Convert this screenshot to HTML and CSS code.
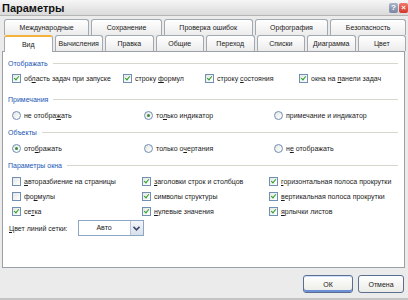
FILE: index.html
```html
<!DOCTYPE html>
<html lang="ru">
<head>
  <meta charset="UTF-8" />
  <title>Параметры</title>
  <link rel="stylesheet" href="styles.css">
</head>
<body>
  <div class="window">
    <div class="titlebar">
      <span class="title">Параметры</span>
      <span class="tb-btn help">?</span>
      <span class="tb-btn close">×</span>
    </div>

    <div class="tabs">
      <div class="tab-row row-back">
        <div class="tab">Международные</div>
        <div class="tab">Сохранение</div>
        <div class="tab">Проверка ошибок</div>
        <div class="tab">Орфография</div>
        <div class="tab">Безопасность</div>
      </div>
      <div class="tab-row row-front">
        <div class="tab active">Вид</div>
        <div class="tab">Вычисления</div>
        <div class="tab">Правка</div>
        <div class="tab">Общие</div>
        <div class="tab">Переход</div>
        <div class="tab">Списки</div>
        <div class="tab">Диаграмма</div>
        <div class="tab">Цвет</div>
      </div>
    </div>

    <div class="panel">
      <div class="group g-show">
        <div class="group-title">Отображать</div>
        <div class="row cols-show">
          <label class="opt"><span class="cb on"></span><span>об<u>л</u>асть задач при запуске</span></label>
          <label class="opt"><span class="cb on"></span><span>строку <u>ф</u>ормул</span></label>
          <label class="opt"><span class="cb on"></span><span>строку <u>с</u>остояния</span></label>
          <label class="opt"><span class="cb on"></span><span>окна на <u>п</u>анели задач</span></label>
        </div>
      </div>

      <div class="group g-notes">
        <div class="group-title">Примечания</div>
        <div class="row cols-3 radio-row">
          <label class="opt"><span class="rb"></span><span>не отобра<u>ж</u>ать</span></label>
          <label class="opt"><span class="rb on"></span><span>то<u>л</u>ько индикатор</span></label>
          <label class="opt"><span class="rb"></span><span>примечание и ин<u>д</u>икатор</span></label>
        </div>
      </div>

      <div class="group g-obj">
        <div class="group-title">Объекты</div>
        <div class="row cols-3 radio-row">
          <label class="opt"><span class="rb on"></span><span>ото<u>б</u>ражать</span></label>
          <label class="opt"><span class="rb"></span><span>только о<u>ч</u>ертания</span></label>
          <label class="opt"><span class="rb"></span><span>н<u>е</u> отображать</span></label>
        </div>
      </div>

      <div class="group g-win">
        <div class="group-title">Параметры окна</div>
        <div class="row cols-win">
          <label class="opt"><span class="cb"></span><span><u>а</u>вторазбиение на страницы</span></label>
          <label class="opt"><span class="cb on"></span><span><u>з</u>аголовки строк и столбцов</span></label>
          <label class="opt"><span class="cb on"></span><span><u>г</u>оризонтальная полоса прокрутки</span></label>
        </div>
        <div class="row cols-win">
          <label class="opt"><span class="cb"></span><span>фо<u>р</u>мулы</span></label>
          <label class="opt"><span class="cb on"></span><span>символы структуры</span></label>
          <label class="opt"><span class="cb on"></span><span><u>в</u>ертикальная полоса прокрутки</span></label>
        </div>
        <div class="row cols-win">
          <label class="opt"><span class="cb on"></span><span>се<u>т</u>ка</span></label>
          <label class="opt"><span class="cb on"></span><span><u>н</u>улевые значения</span></label>
          <label class="opt"><span class="cb on"></span><span><u>я</u>рлычки листов</span></label>
        </div>
        <div class="color-row">
          <span><u>Ц</u>вет линий сетки:</span>
          <div class="select">
            <span class="select-value">Авто</span>
            <span class="select-arrow">
              <svg width="7" height="5" viewBox="0 0 7 5"><polyline points="0.5,0.8 3.5,3.8 6.5,0.8" fill="none" stroke="#3c4a6a" stroke-width="1.6"/></svg>
            </span>
          </div>
        </div>
      </div>
    </div>

    <div class="footer">
      <button class="btn default">ОК</button>
      <button class="btn">Отмена</button>
    </div>
  </div>
</body>
</html>
```

FILE: styles.css
```css
body {
  margin: 0;
  font-family: 'Liberation Sans', Arial, sans-serif;
  font-size: 7px;
  color: #1a1a1a;
}

.window {
  width: 408px;
  height: 300px;
  box-sizing: border-box;
  background: #ebebeb;
  border-bottom: 2px solid #c4c4c4;
  display: flex;
  flex-direction: column;
}

.titlebar {
  height: 15px;
  display: flex;
  align-items: center;
  background: linear-gradient(#f6f6f6, #dadada);
  border-bottom: 1px solid #b5b5b5;
  padding-left: 2px;
}

.title {
  flex: 1;
  font-size: 11px;
  font-weight: bold;
  color: #111;
}

.tb-btn {
  width: 9px;
  height: 10px;
  margin-left: 2px;
  border-radius: 2px;
  font-size: 8px;
  line-height: 10px;
  text-align: center;
  color: #fff;
  font-weight: bold;
}

.help {
  background: linear-gradient(#a9b3c8, #7b87a3);
}

.close {
  background: linear-gradient(#f07a6a, #d2362a);
  margin-left: 1px;
}

.tabs {
  margin-top: 3px;
  padding: 0 2px 0 4px;
}

.tab-row {
  display: flex;
  height: 16px;
}

.tab {
  box-sizing: border-box;
  height: 16px;
  line-height: 15px;
  text-align: center;
  white-space: nowrap;
  background: linear-gradient(#ffffff, #ececec);
  border: 1px solid #a3a9b0;
  border-bottom: none;
  border-radius: 3px 3px 0 0;
  margin-right: 2px;
  color: #222;
}

.row-back .tab {
  flex: 1 1 auto;
  padding: 0 8px;
}

.row-back .tab:last-child,
.row-front .tab:last-child {
  margin-right: 0;
}

.row-front .tab {
  flex: 1 1 0;
}

.tab.active {
  background: #fff;
  border-top: 2px solid #f3b33d;
  height: 17px;
  margin-bottom: -1px;
  position: relative;
  z-index: 1;
}

.panel {
  height: 217px;
  box-sizing: border-box;
  margin: 0 3px 0 2px;
  background: #fff;
  border: 1px solid #9aa0a6;
  padding: 5px 6px 0 5px;
}

.group-title {
  display: flex;
  align-items: center;
  height: 12px;
  color: #2055b5;
  margin-bottom: 2px;
}

.group-title::after {
  content: "";
  flex: 1;
  height: 1px;
  margin-left: 5px;
  background: #d6d6cc;
}

.g-notes {
  margin-top: 7px;
}

.g-obj,
.g-win {
  margin-top: 3px;
}

.g-win .group-title {
  margin-bottom: 3px;
}

.row {
  display: grid;
  height: 15px;
  align-items: center;
  padding-left: 4px;
}

.radio-row {
  height: 16px;
}

.cols-show {
  grid-template-columns: 111px 82px 94px auto;
}

.cols-3 {
  grid-template-columns: 132px 130px auto;
}

.cols-win {
  grid-template-columns: 130px 127px auto;
}

.opt {
  display: flex;
  align-items: center;
  white-space: nowrap;
}

.cb,
.rb {
  box-sizing: border-box;
  width: 9px;
  height: 9px;
  margin-right: 3px;
  border: 1px solid #6f8fb6;
  background: linear-gradient(135deg, #e6e6e0, #ffffff);
  position: relative;
  flex: none;
}

.rb {
  border-radius: 50%;
}

.cb.on::after {
  content: "";
  position: absolute;
  left: 2px;
  top: 0px;
  width: 2px;
  height: 4px;
  border: solid #2aa12a;
  border-width: 0 1.5px 1.5px 0;
  transform: rotate(40deg);
}

.rb.on::after {
  content: "";
  position: absolute;
  left: 2px;
  top: 2px;
  width: 3px;
  height: 3px;
  border-radius: 50%;
  background: #3b8a3b;
}

.color-row {
  display: flex;
  align-items: center;
  margin-top: 1px;
  padding-left: 1px;
  height: 16px;
}

.select {
  margin-left: 10px;
  width: 66px;
  height: 16px;
  box-sizing: border-box;
  border: 1px solid #8ea6c4;
  display: flex;
  background: #fff;
}

.select-value {
  flex: 1;
  text-align: center;
  line-height: 14px;
}

.select-arrow {
  width: 12px;
  display: flex;
  align-items: center;
  justify-content: center;
  background: linear-gradient(#f4f6fb, #d8dfec);
  border-left: 1px solid #b9c6da;
}

.footer {
  flex: 1;
  display: flex;
  justify-content: flex-end;
  align-items: flex-start;
  padding: 7px 4px 0 0;
  gap: 5px;
}

.btn {
  font-family: 'Liberation Sans', Arial, sans-serif;
  font-size: 7px;
  height: 18px;
  width: 46px;
  padding: 0;
  border: 1px solid #5a6f8f;
  border-radius: 3px;
  background: linear-gradient(#ffffff, #ebebe6);
  color: #222;
}

.btn.default {
  width: 50px;
  box-shadow: inset 0 -2px 0 #6d8fd8, inset 0 1px 0 #cfe0ff;
}
```
